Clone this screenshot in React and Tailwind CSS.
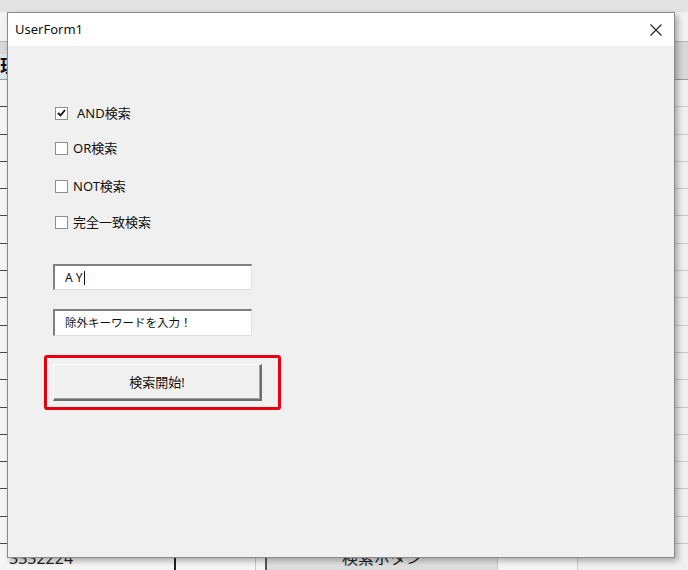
import React from 'react';

const jp = { fontFamily: '"Noto Sans", "Noto Sans CJK JP", sans-serif' };

function CheckRow({ label, checked, className }) {
  return (
    <div className={`flex items-center h-4 ${className}`}>
      <div className="w-[13px] h-[13px] bg-white border border-[#8f8f8f] flex items-center justify-center">
        {checked && (
          <svg width="9" height="8" viewBox="0 0 9 8">
            <path d="M1 4 L3.5 6.5 L8 1" stroke="#111" strokeWidth="1.8" fill="none" />
          </svg>
        )}
      </div>
      <span className={`text-[13px] leading-4 text-[#111] ${checked ? 'ml-[9px]' : 'ml-[5px]'}`}>{label}</span>
    </div>
  );
}

function SheetRow({ children, last }) {
  return (
    <div className="flex h-[27.3px] shrink-0">
      <div className={`w-[176px] shrink-0 border-b ${last ? 'border-r-2 border-r-[#222] border-b-transparent' : 'border-b-[#4a4a4a]'} bg-[#f6f6f6] flex items-end`}>
        {children}
      </div>
      <div className="w-[80px] shrink-0 border-b border-r border-[#c9c9c9] bg-[#f6f6f6]" />
      <div className="w-[9px] shrink-0 border-b border-[#c9c9c9] bg-[#f6f6f6]" />
      <div className={`w-[232px] shrink-0 border-b border-[#c9c9c9] ${last ? 'bg-gradient-to-b from-[#f2f2f2] to-[#dcdcdc] border-l-2 border-l-[#555] flex justify-center' : 'bg-[#f6f6f6]'}`}>
        {last && <span className="text-[16px] text-[#222] mt-[2px] leading-6">検索ボタン</span>}
      </div>
      <div className="w-[80px] shrink-0 border-b border-l border-[#c9c9c9] bg-[#f6f6f6]" />
      <div className="flex-1 border-b border-l border-[#c9c9c9] bg-[#f0f0f0]" />
    </div>
  );
}

export default function App() {
  const rows = Array.from({ length: 17 });
  return (
    <div className="relative w-[688px] h-[570px] overflow-hidden bg-[#f4f4f4]" style={jp}>
      {/* spreadsheet behind the form */}
      <div className="flex flex-col w-full">
        <div className="h-[12px] bg-[#e3e3e3]" />
        <div className="h-[30px] bg-[#f2f2f2] border-b border-[#b5b5b5]" />
        <div className="h-[38px] bg-[#d8d8d8] border-b border-[#9c9c9c] flex items-end">
          <div className="w-[8px] h-[25px] bg-[#dce6f1] text-[18px] leading-[25px] font-bold overflow-hidden text-[#111]">理</div>
        </div>
        {rows.map((_, i) => (
          <SheetRow key={i} />
        ))}
        <SheetRow last>
          <span className="text-[16px] text-[#222] leading-5 ml-[9px] mb-[2px]">3332224</span>
        </SheetRow>
      </div>

      {/* UserForm window */}
      <div className="absolute left-[7px] top-[12px] w-[668px] h-[546px] border border-[#8a8a8a] bg-[#f0f0f0] shadow-[3px_3px_6px_rgba(0,0,0,0.3)] flex flex-col">
        <div className="h-[33px] bg-white flex items-center justify-between pl-[7px] pr-[12px] shrink-0">
          <span className="text-[13px] text-[#111]" style={{ fontFamily: '"Noto Sans", sans-serif' }}>UserForm1</span>
          <svg width="12" height="12" viewBox="0 0 12 12">
            <path d="M0.5 0.5 L11.5 11.5 M11.5 0.5 L0.5 11.5" stroke="#222" strokeWidth="1.1" />
          </svg>
        </div>
        <div className="flex flex-col pl-[36px]">
          <CheckRow className="mt-[59px] ml-[11px]" label="AND検索" checked />
          <CheckRow className="mt-[19px] ml-[11px]" label="OR検索" />
          <CheckRow className="mt-[22px] ml-[11px]" label="NOT検索" />
          <CheckRow className="mt-[20px] ml-[11px]" label="完全一致検索" />

          <div className="mt-[34px] ml-[9px] w-[199px] h-[26px] bg-white border-t-2 border-l-2 border-[#808080] border-r border-b border-r-[#dedede] border-b-[#dedede] flex items-center pl-[10px]">
            <span className="text-[12px] text-[#111] leading-4">A Y</span>
            <span className="w-px h-[14px] bg-[#111] ml-[1px]" />
          </div>

          <div className="mt-[19px] ml-[9px] w-[199px] h-[27px] bg-white border-t-2 border-l-2 border-[#808080] border-r border-b border-r-[#dedede] border-b-[#dedede] flex items-center pl-[10px]">
            <span className="text-[11.5px] text-[#111] leading-4">除外キーワードを入力！</span>
          </div>

          <div className="mt-[19px] w-[237px] h-[55px] border-[3px] border-[#e60012] rounded-[3px] pl-[6px] pt-[6px]">
            <div className="w-[209px] h-[37px] bg-[#f0f0f0] border-t border-l border-t-white border-l-white border-r-2 border-b-2 border-r-[#6e6e6e] border-b-[#6e6e6e] shadow-[inset_-1px_-1px_0_#a0a0a0] flex items-center justify-center">
              <span className="text-[13px] text-[#111] leading-4">検索開始!</span>
            </div>
          </div>
        </div>
      </div>
    </div>
  );
}
